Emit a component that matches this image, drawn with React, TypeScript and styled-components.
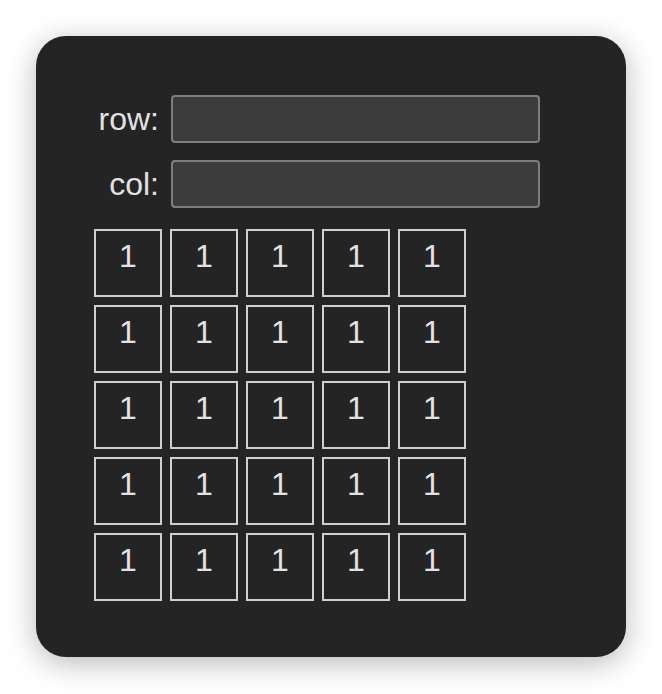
import React from 'react';
import styled, { createGlobalStyle } from 'styled-components';

const ROWS = 5;
const COLS = 5;

const GlobalStyle = createGlobalStyle`
  html, body {
    margin: 0;
    padding: 0;
    background: #ffffff;
  }
  body {
    font-family: 'Liberation Sans', Arial, sans-serif;
  }
`;

const App: React.FC = () => {
  const grid = Array.from({ length: ROWS }, () => Array.from({ length: COLS }, () => 1));

  return (
    <Page>
      <GlobalStyle />
      <Card>
        <FieldRow>
          <Label>row:</Label>
          <TextInput type="text" />
        </FieldRow>
        <FieldRow>
          <Label>col:</Label>
          <TextInput type="text" />
        </FieldRow>
        <Grid cols={COLS}>
          {grid.flat().map((value, i) => (
            <Cell key={i}>{value}</Cell>
          ))}
        </Grid>
      </Card>
    </Page>
  );
};

export default App;

const Page = styled.div`
  padding: 36px;
  display: flex;
  align-items: flex-start;
`;

const Card = styled.div`
  width: 590px;
  box-sizing: border-box;
  padding: 59px 58px 56px;
  background: #242424;
  border-radius: 30px;
  box-shadow: 0 6px 30px rgba(0, 0, 0, 0.28);
  display: flex;
  flex-direction: column;
  gap: 17px;
  color: #e2e2e2;
`;

const FieldRow = styled.div`
  display: flex;
  align-items: center;
  gap: 12px;
`;

const Label = styled.label`
  width: 65px;
  text-align: right;
  font-size: 32px;
  color: #e2e2e2;
  white-space: nowrap;
`;

const TextInput = styled.input`
  width: 369px;
  height: 48px;
  box-sizing: border-box;
  background: #3c3c3c;
  border: 2px solid #7e7e7e;
  border-radius: 4px;
  outline: none;
  color: #e2e2e2;
  font-size: 24px;
  font-family: inherit;
  padding: 0 8px;
`;

const Grid = styled.div<{ cols: number }>`
  margin-top: 4px;
  display: grid;
  grid-template-columns: repeat(${p => p.cols}, 68px);
  grid-auto-rows: 68px;
  gap: 8px;
`;

const Cell = styled.div`
  box-sizing: border-box;
  border: 2px solid #cfcfcf;
  padding-top: 7px;
  text-align: center;
  font-size: 32px;
  line-height: normal;
  color: #e2e2e2;
`;
